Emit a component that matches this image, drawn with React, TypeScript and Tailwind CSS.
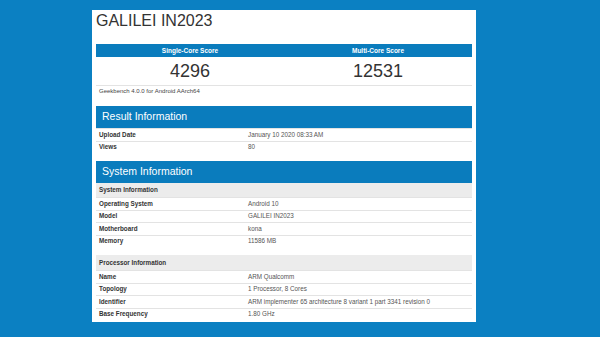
import React from "react";

const font = { fontFamily: '"Liberation Sans", Arial, sans-serif' };

function Row({ label, value }: { label: string; value: string }) {
  return (
    <div className="grid grid-cols-[149px_1fr] h-[12.5px] items-center border-t border-[#e3e3e3] first:border-t-0">
      <div className="pl-[3px] text-[6.3px] font-bold text-[#333] leading-none">{label}</div>
      <div className="pl-[3px] text-[6.3px] text-[#555] leading-none">{value}</div>
    </div>
  );
}

function Bar({ title }: { title: string }) {
  return (
    <div className="h-[22px] bg-[#0a7cbd] flex items-center pl-[6px] text-white text-[10.5px]">
      {title}
    </div>
  );
}

function Sub({ title, h }: { title: string; h: string }) {
  return (
    <div className={`${h} bg-[#ececec] flex items-center pl-[3px] text-[6.3px] font-bold text-[#333]`}>
      {title}
    </div>
  );
}

export default function App() {
  return (
    <div className="w-[600px] h-[337px] bg-[#0b80c2] overflow-hidden pt-[10px] pl-[92px]" style={font}>
      <div className="w-[384px] h-[312px] bg-white px-[4px]">
        <div className="h-[34px] pt-[1px]">
          <div className="text-[16px] leading-[20px] text-[#333]">GALILEI IN2023</div>
        </div>
        <div className="h-[13px] bg-[#0a7cbd] grid grid-cols-2 items-center text-white text-[6.5px] font-bold text-center">
          <div>Single-Core Score</div>
          <div>Multi-Core Score</div>
        </div>
        <div className="h-[29px] grid grid-cols-2 border-b border-[#e3e3e3] text-center text-[18px] leading-[28px] text-[#333]">
          <div>4296</div>
          <div>12531</div>
        </div>
        <div className="h-[11px] leading-[11px] pl-[3px] text-[6px] text-[#444]">
          Geekbench 4.0.0 for Android AArch64
        </div>
        <div className="mt-[9px]">
          <Bar title="Result Information" />
          <Row label="Upload Date" value="January 10 2020 08:33 AM" />
          <Row label="Views" value="80" />
        </div>
        <div className="mt-[8px]">
          <Bar title="System Information" />
          <Sub title="System Information" h="h-[14px]" />
          <Row label="Operating System" value="Android 10" />
          <Row label="Model" value="GALILEI IN2023" />
          <Row label="Motherboard" value="kona" />
          <Row label="Memory" value="11586 MB" />
          <div className="mt-[8px]">
            <Sub title="Processor Information" h="h-[15px]" />
            <Row label="Name" value="ARM Qualcomm" />
            <Row label="Topology" value="1 Processor, 8 Cores" />
            <Row label="Identifier" value="ARM implementer 65 architecture 8 variant 1 part 3341 revision 0" />
            <Row label="Base Frequency" value="1.80 GHz" />
          </div>
        </div>
      </div>
    </div>
  );
}
